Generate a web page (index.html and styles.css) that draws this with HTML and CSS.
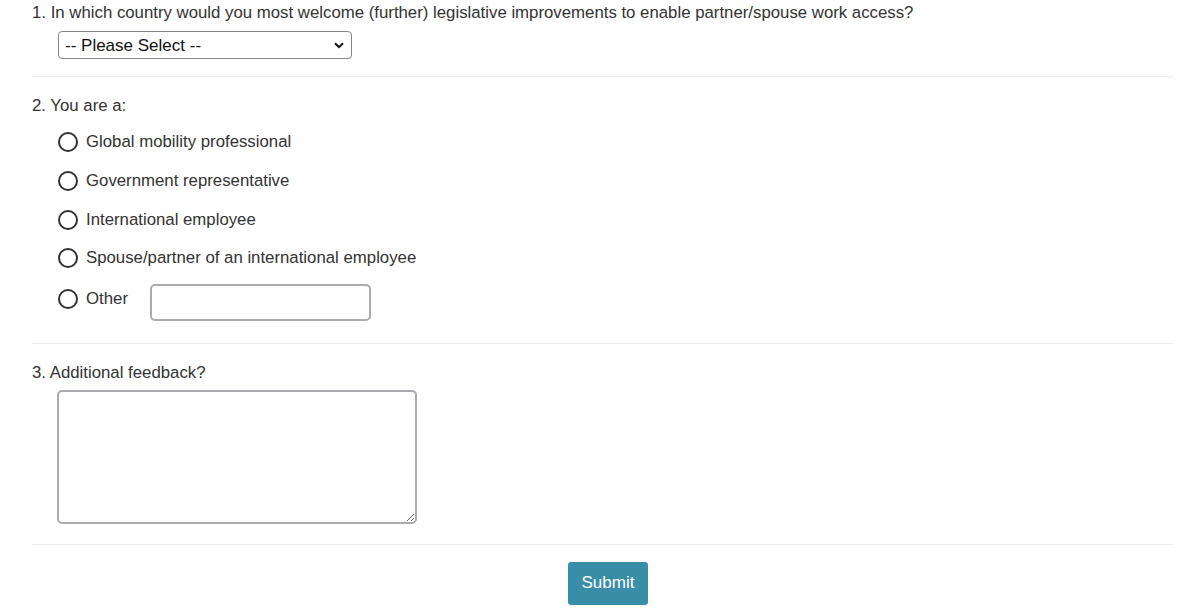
FILE: index.html
```html
<!DOCTYPE html>
<html lang="en">
<head>
  <meta charset="UTF-8">
  <meta name="viewport" content="width=device-width, initial-scale=1.0">
  <title>Partner Work Access Survey</title>
  <link rel="stylesheet" href="styles.css">
</head>
<body>

  <form class="survey" id="surveyForm">
    <div class="question q-country">
      <label class="q-label" for="country">1. In which country would you most welcome (further) legislative improvements to enable partner/spouse work access?</label>
      <div class="select-wrap">
        <select id="country" name="country">
          <option value="">-- Please Select --</option>
          <option>Belgium</option>
          <option>France</option>
          <option>Germany</option>
          <option>Netherlands</option>
        </select>
        <svg class="chevron" width="10" height="7" viewBox="0 0 10 7">
          <path d="M1 1.2 L5 5.2 L9 1.2" fill="none" stroke="#111" stroke-width="2"/>
        </svg>
      </div>
    </div>

    <div class="question q-role">
      <div class="q-label">2. You are a:</div>
      <label class="option"><input type="radio" name="role" value="gmp"> Global mobility professional</label>
      <label class="option"><input type="radio" name="role" value="gov"> Government representative</label>
      <label class="option"><input type="radio" name="role" value="emp"> International employee</label>
      <label class="option"><input type="radio" name="role" value="spouse"> Spouse/partner of an international employee</label>
      <div class="option option-other">
        <label><input type="radio" name="role" value="other"> Other</label>
        <input type="text" class="other-text" name="other">
      </div>
    </div>

    <div class="question q-feedback">
      <label class="q-label" for="feedback">3. Additional feedback?</label>
      <textarea id="feedback" name="feedback"></textarea>
    </div>

    <div class="actions">
      <button type="submit">Submit</button>
    </div>
  </form>

</body>
</html>
```

FILE: styles.css
```css
* {
  box-sizing: border-box;
  margin: 0;
  padding: 0;
}

body {
  font-family: "Liberation Sans", Arial, sans-serif;
  font-size: 16.8px;
  color: #333;
  background: #fff;
}

.survey {
  padding: 0 27px 0 32px;
}

.question {
  border-bottom: 1px solid #ebebeb;
  display: flex;
  flex-direction: column;
  align-items: flex-start;
}

.q-label {
  display: block;
  line-height: 20px;
}

.q-country {
  padding-top: 3px;
  padding-bottom: 17px;
}

.select-wrap {
  position: relative;
  margin: 8px 0 0 26px;
}

select {
  appearance: none;
  -webkit-appearance: none;
  width: 294px;
  height: 28px;
  padding: 0 24px 0 6px;
  font-family: inherit;
  font-size: 17px;
  color: #111;
  background: #fff;
  border: 1px solid #858585;
  border-radius: 4px;
}

.chevron {
  position: absolute;
  right: 8px;
  top: 11px;
  pointer-events: none;
}

.q-role {
  padding-top: 19px;
  padding-bottom: 22px;
}

.q-role .q-label {
  margin-bottom: 7px;
}

.option {
  display: flex;
  align-items: center;
  height: 38.7px;
  margin-left: 26px;
  line-height: 20px;
}

.option label {
  display: flex;
  align-items: center;
}

input[type="radio"] {
  appearance: none;
  -webkit-appearance: none;
  width: 20px;
  height: 20px;
  border: 2px solid #333;
  border-radius: 50%;
  margin-right: 8px;
  background: #fff;
}

input[type="radio"]:checked {
  background: radial-gradient(#333 0 4px, #fff 5px);
}

.option-other {
  height: 37px;
  margin-top: 6px;
}

.option-other label {
  margin-bottom: 6px;
}

.other-text {
  width: 221px;
  height: 37px;
  margin-left: 22px;
  border: 2px solid #a9abae;
  border-radius: 5px;
  padding: 4px 8px;
  font-family: inherit;
  font-size: 17px;
}

.q-feedback {
  padding-top: 19px;
  padding-bottom: 20px;
}

textarea {
  width: 360px;
  height: 134px;
  margin: 7px 0 0 25px;
  border: 2px solid #a9abae;
  border-radius: 5px;
  padding: 6px 8px;
  font-family: inherit;
  font-size: 17px;
  resize: vertical;
}

.actions {
  display: flex;
  justify-content: center;
  padding: 17px 0 0 11px;
}

button {
  width: 80px;
  height: 43px;
  background-color: #3a8da6;
  color: #fff;
  border: none;
  border-radius: 3px;
  font-family: inherit;
  font-size: 17px;
  cursor: pointer;
}

button:hover {
  background-color: #327d94;
}
```
